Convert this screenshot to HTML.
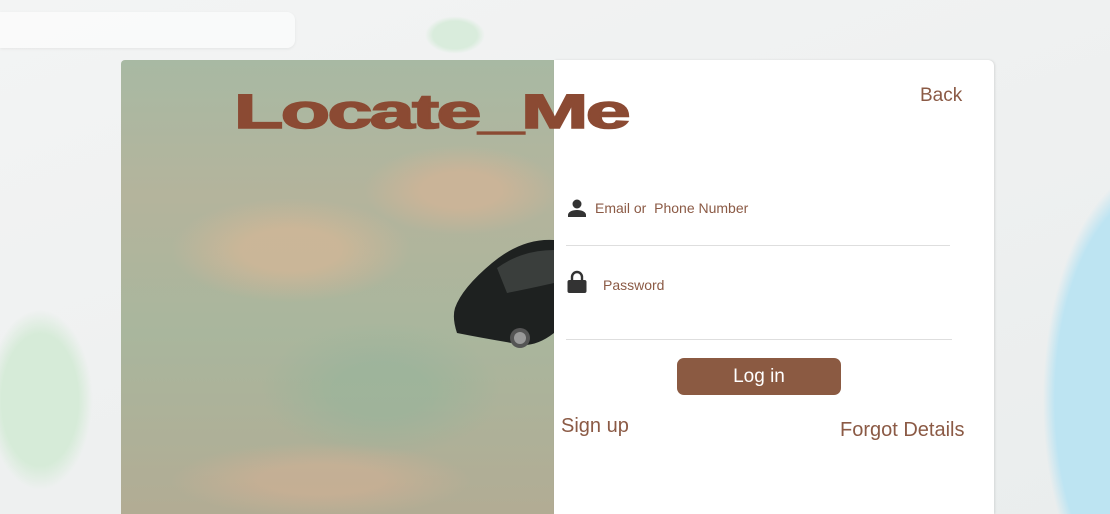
<!DOCTYPE html>
<html><head><meta charset="utf-8"><style>
*{margin:0;padding:0;box-sizing:border-box}
body{width:1110px;height:514px;overflow:hidden;position:relative;font-family:"Liberation Sans",sans-serif;background:#eef0f0}
.bg{position:absolute;inset:0;background:
radial-gradient(ellipse 70px 120px at 40px 400px,#d6ebd8 55%,transparent 75%),
radial-gradient(ellipse 40px 25px at 455px 35px,#d9ecdc 55%,transparent 75%),
radial-gradient(ellipse 150px 300px at 1160px 400px,#bde4f2 70%,transparent 78%),
linear-gradient(160deg,#f3f4f4,#eaeded)}
.search{position:absolute;left:0;top:12px;width:295px;height:36px;background:#fff;border-radius:0 8px 8px 0;box-shadow:0 1px 3px rgba(0,0,0,.1);opacity:.6}
.photo{position:absolute;left:121px;top:60px;width:433px;height:454px;border-radius:4px 0 0 0;background:
radial-gradient(ellipse 160px 70px at 170px 190px,rgba(214,182,150,.7) 30%,transparent 75%),
radial-gradient(ellipse 130px 60px at 340px 130px,rgba(212,180,150,.7) 30%,transparent 75%),
radial-gradient(ellipse 200px 50px at 200px 420px,rgba(210,176,148,.6) 30%,transparent 75%),
radial-gradient(ellipse 160px 90px at 260px 330px,rgba(150,180,155,.6) 30%,transparent 75%),
linear-gradient(180deg,#a8b9a3 0%,#b4b49c 30%,#a9b69d 60%,#b2ac94 100%)}
.car{position:absolute;left:452px;top:238px;width:102px;height:118px}
.card{position:absolute;left:554px;top:60px;width:440px;height:454px;background:#fff;border-radius:0 6px 0 0;box-shadow:1px 0 2px rgba(0,0,0,.1)}
.title{position:absolute;left:234px;top:85px;font-size:48px;font-weight:bold;color:#8b4a33;transform:scaleX(1.68);transform-origin:left top;letter-spacing:-1.5px;white-space:nowrap;-webkit-text-stroke:1.6px #8b4a33}
.t{position:absolute;color:#8b5a45;white-space:nowrap}
.line{position:absolute;height:1px;background:#dedede}
.btn{position:absolute;left:677px;top:358px;width:164px;height:37px;background:#8b5a42;border-radius:7px;color:#fff;font-size:19px;text-align:center;line-height:37px}
</style></head><body>
<div class="bg"></div>
<div class="search"></div>
<div class="photo"></div>
<svg class="car" viewBox="0 0 102 118"><path d="M40 25 Q70 0 102 2 L102 95 Q80 112 60 105 Q30 100 5 95 Q0 80 3 70 Q10 50 40 25Z" fill="#1e2120"/><path d="M45 30 Q70 12 102 12 L102 45 Q80 50 55 55 Z" fill="#3a3e3c"/><circle cx="68" cy="100" r="10" fill="#555"/><circle cx="68" cy="100" r="6" fill="#999"/></svg>
<div class="card"></div>
<div class="title">Locate_Me</div>
<div class="t" style="left:920px;top:85px;font-size:19px">Back</div>
<svg style="position:absolute;left:567px;top:198px" width="20" height="20" viewBox="0 0 20 20"><circle cx="10" cy="6" r="4.5" fill="#333"/><path d="M1 19v-2c0-3 4-5 9-5s9 2 9 5v2z" fill="#333"/></svg>
<div class="t" style="left:595px;top:200px;font-size:14px">Email or&nbsp; Phone Number</div>
<div class="line" style="left:566px;top:245px;width:384px"></div>
<svg style="position:absolute;left:567px;top:270px" width="20" height="24" viewBox="0 0 20 24"><path d="M5 10V7a5 5 0 0 1 10 0v3" stroke="#333" stroke-width="2.4" fill="none"/><rect x="0.5" y="10" width="19" height="13" rx="2" fill="#333"/></svg>
<div class="t" style="left:603px;top:277px;font-size:14px">Password</div>
<div class="line" style="left:566px;top:339px;width:386px"></div>
<div class="btn">Log in</div>
<div class="t" style="left:561px;top:415px;font-size:20px">Sign up</div>
<div class="t" style="left:840px;top:419px;font-size:20px">Forgot Details</div>
</body></html>
